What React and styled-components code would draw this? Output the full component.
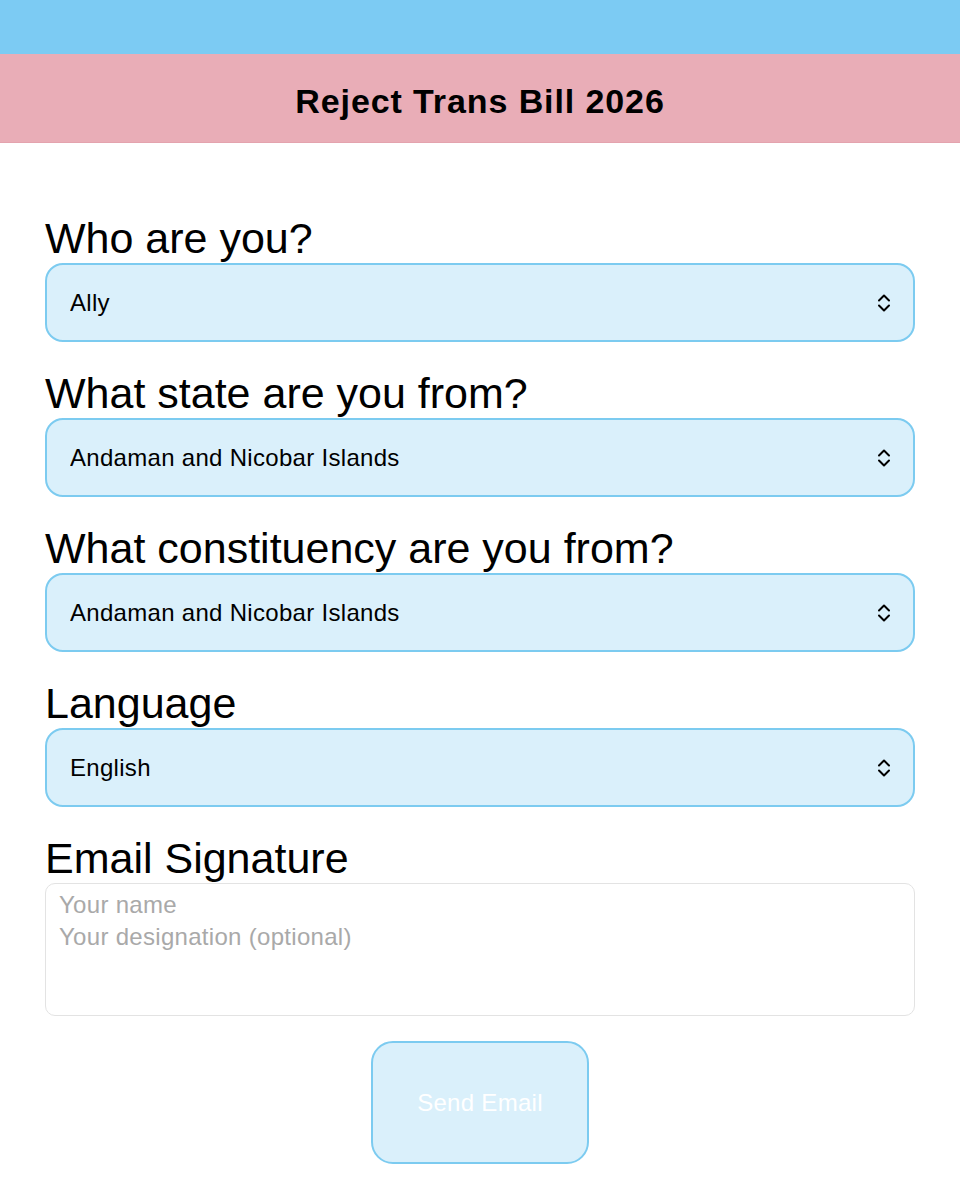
import React from 'react';
import styled, { createGlobalStyle } from 'styled-components';

const GlobalStyle = createGlobalStyle`
  * { box-sizing: border-box; }
  body {
    margin: 0;
    background: #ffffff;
    font-family: "Liberation Sans", Arial, sans-serif;
    color: #000;
  }
`;

const BlueBar = styled.div`
  height: 54px;
  background: #7ccbf3;
`;

const Header = styled.header`
  height: 89px;
  padding-top: 7px;
  background: #e9adb7;
  border-bottom: 1px solid #e4a3ae;
  display: flex;
  align-items: center;
  justify-content: center;
`;

const Title = styled.h1`
  margin: 0;
  font-size: 34px;
  font-weight: 700;
  letter-spacing: 0.9px;
`;

const Form = styled.form`
  padding: 72px 45px 36px;
  display: flex;
  flex-direction: column;
`;

const Field = styled.div`
  display: flex;
  flex-direction: column;
  margin-bottom: 28px;

  &:last-of-type {
    margin-bottom: 25px;
  }
`;

const Label = styled.label`
  font-size: 43px;
  line-height: 46px;
  margin-bottom: 2px;
`;

const SelectWrap = styled.div`
  position: relative;
`;

const Select = styled.select`
  appearance: none;
  width: 100%;
  height: 79px;
  padding: 0 60px 0 23px;
  border: 2px solid #7ccbf0;
  border-radius: 18px;
  background: #daf0fb;
  font-family: "Liberation Sans", Arial, sans-serif;
  font-size: 24px;
  letter-spacing: 0.3px;
  color: #000;
  outline: none;
`;

const Chevron = styled.svg`
  position: absolute;
  right: 24px;
  top: 50%;
  transform: translateY(-50%);
  pointer-events: none;
`;

const TextArea = styled.textarea`
  width: 100%;
  height: 133px;
  resize: none;
  padding: 5px 13px;
  border: 1px solid #e3e3e3;
  border-radius: 10px;
  font-family: "Liberation Sans", Arial, sans-serif;
  font-size: 24px;
  letter-spacing: 0.3px;
  line-height: 32px;
  outline: none;

  &::placeholder {
    color: #a9a9a9;
  }
`;

const SendButton = styled.button`
  align-self: center;
  width: 218px;
  height: 123px;
  border: 2px solid #7ccbf0;
  border-radius: 22px;
  background: #daf0fb;
  color: #ffffff;
  font-family: "Liberation Sans", Arial, sans-serif;
  font-size: 24px;
  letter-spacing: 0.3px;
`;

const UpDown = () => (
  <Chevron width="14" height="20" viewBox="0 0 14 20" fill="none">
    <path d="M2 7.5 L7 2.5 L12 7.5" stroke="#000" strokeWidth="2" strokeLinecap="round" strokeLinejoin="round" />
    <path d="M2 12.5 L7 17.5 L12 12.5" stroke="#000" strokeWidth="2" strokeLinecap="round" strokeLinejoin="round" />
  </Chevron>
);

const fields = [
  { id: 'who', label: 'Who are you?', value: 'Ally' },
  { id: 'state', label: 'What state are you from?', value: 'Andaman and Nicobar Islands' },
  { id: 'const', label: 'What constituency are you from?', value: 'Andaman and Nicobar Islands' },
  { id: 'lang', label: 'Language', value: 'English' },
];

const App = () => (
  <>
    <GlobalStyle />
    <BlueBar />
    <Header>
      <Title>Reject Trans Bill 2026</Title>
    </Header>
    <Form onSubmit={(e) => e.preventDefault()}>
      {fields.map((f) => (
        <Field key={f.id}>
          <Label htmlFor={f.id}>{f.label}</Label>
          <SelectWrap>
            <Select id={f.id} defaultValue={f.value}>
              <option>{f.value}</option>
            </Select>
            <UpDown />
          </SelectWrap>
        </Field>
      ))}
      <Field>
        <Label htmlFor="sig">Email Signature</Label>
        <TextArea id="sig" placeholder={'Your name\nYour designation (optional)'} />
      </Field>
      <SendButton type="submit" disabled>Send Email</SendButton>
    </Form>
  </>
);

export default App;
